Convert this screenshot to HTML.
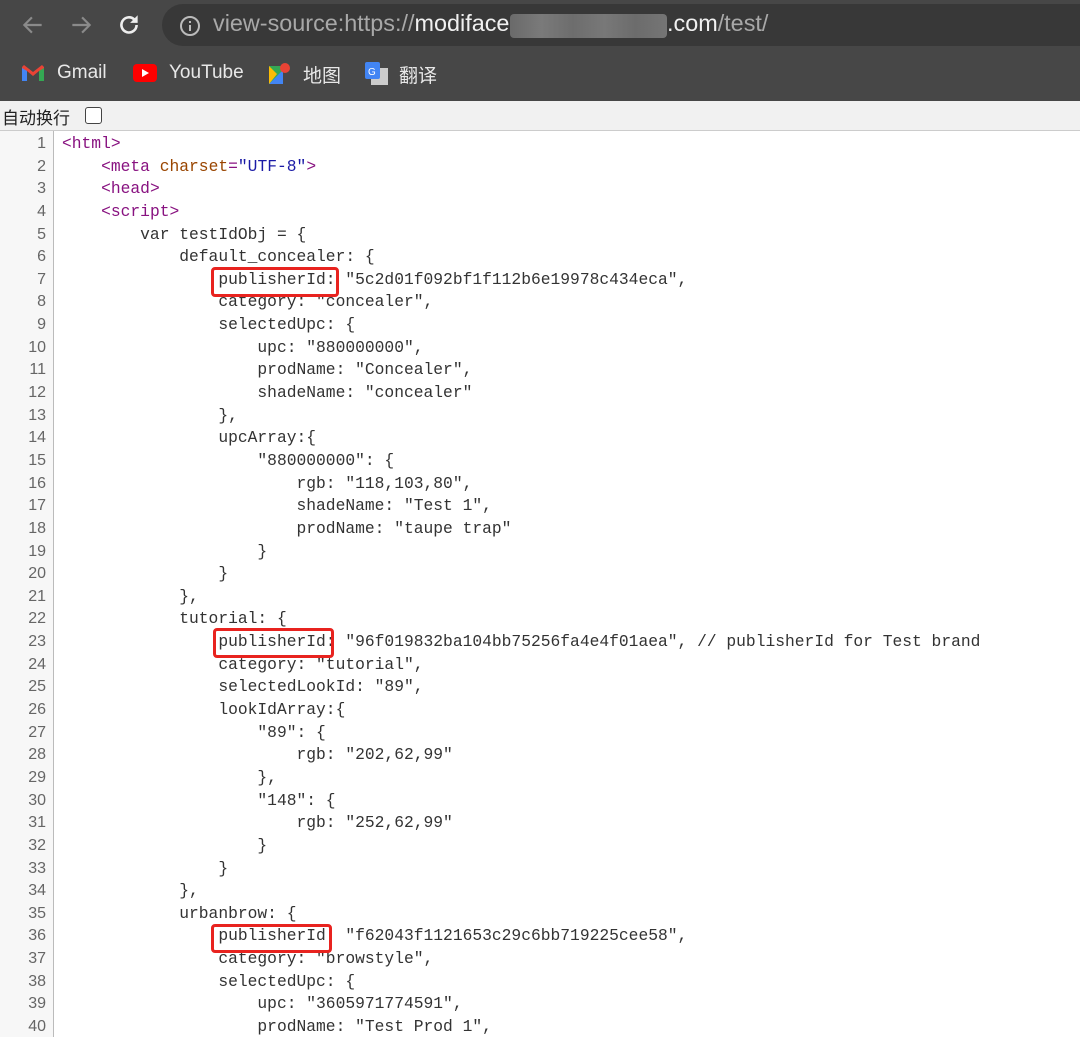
<!DOCTYPE html>
<html><head><meta charset="utf-8"><style>
body{margin:0;width:1080px;height:1037px;overflow:hidden;background:#fff;position:relative;font-family:"Liberation Sans","Noto Sans CJK SC",sans-serif}
#top{position:absolute;left:0;top:0;width:1080px;height:101px;background:#474747}
#pill{position:absolute;left:162px;top:4px;width:940px;height:42px;border-radius:21px;background:#383838}
.url{position:absolute;top:10px;font-size:23.4px;color:#a8a8a8;white-space:nowrap}
.url b{font-weight:normal;color:#f0f0f0}
.blur{position:absolute;left:510px;top:14px;width:157px;height:24px;background:linear-gradient(90deg,#6a6a6a,#7a7a7a 20%,#6d6d6d 40%,#787878 60%,#6c6c6c 80%,#757575);border-radius:4px}
.bm{position:absolute;top:62px;font-size:19px;color:#e8e8e8;white-space:nowrap}
#bar{position:absolute;left:0;top:101px;width:1080px;height:29px;background:#f1f1f1;border-bottom:1px solid #ccc;font-size:17px;color:#222}
#gut{position:absolute;left:0;top:131px;width:53px;height:906px;background:#f7f7f7;border-right:1px solid #bbb}
.code{position:absolute;left:0;top:133px;font-family:"Liberation Mono",monospace;font-size:16.3px;line-height:22.64px;white-space:pre;color:#333}
.ln{display:inline-block;width:46px;text-align:right;color:#666;margin-right:16px;font-family:"Liberation Sans",sans-serif;font-size:16px}
.t{color:#881280}.a{color:#994500}.v{color:#1a1aa6}
.box{position:absolute;border:3px solid #e8231f;border-radius:4px}
</style></head><body>
<div id="top">
<svg style="position:absolute;left:20px;top:12px" width="26" height="26" viewBox="0 0 24 24"><path d="M20 12H5M11 5l-7 7 7 7" stroke="#8a8a8a" stroke-width="2" fill="none"/></svg>
<svg style="position:absolute;left:68px;top:12px" width="26" height="26" viewBox="0 0 24 24"><path d="M4 12h15M13 5l7 7-7 7" stroke="#8a8a8a" stroke-width="2" fill="none"/></svg>
<svg style="position:absolute;left:116px;top:12px" width="26" height="26" viewBox="0 0 24 24"><path d="M19 12a7 7 0 1 1-2-5" stroke="#eee" stroke-width="2.4" fill="none"/><path d="M20 3v7h-7z" fill="#eee"/></svg>
<div id="pill"></div>
<svg style="position:absolute;left:178px;top:14px" width="24" height="24" viewBox="0 0 24 24"><circle cx="12" cy="12" r="9" stroke="#bbb" stroke-width="2" fill="none"/><path d="M12 11v6M12 7v2" stroke="#bbb" stroke-width="2"/></svg>
<div class="url" style="left:213px">view-source:https://<b>modiface</b></div>
<div class="url" style="left:667px"><b>.com</b>/test/</div>
<div class="blur"></div>
<svg style="position:absolute;left:22px;top:65px" width="22" height="16" viewBox="0 0 22 16"><path d="M0 2v14h5V6l6 5 6-5v10h5V2l-2-2-9 7-9-7z" fill="#ea4335"/><path d="M0 3v13h5V6z" fill="#4285f4"/><path d="M17 6v10h5V3z" fill="#34a853"/></svg>
<div class="bm" style="left:57px">Gmail</div>
<svg style="position:absolute;left:133px;top:64px" width="24" height="18"><rect width="24" height="18" rx="4" fill="#f00"/><path d="M9 5l7 4-7 4z" fill="#fff"/></svg>
<div class="bm" style="left:169px">YouTube</div>
<svg style="position:absolute;left:269px;top:62px" width="22" height="22"><path d="M0 4h14v18H0z" fill="#34a853"/><path d="M0 22L14 8v14z" fill="#4285f4"/><path d="M0 4l8 8-8 10z" fill="#fbbc04"/><circle cx="16" cy="6" r="5" fill="#ea4335"/></svg>
<div class="bm" style="left:303px;top:61px">地图</div>
<svg style="position:absolute;left:365px;top:62px" width="24" height="24"><rect x="6" y="6" width="17" height="17" fill="#ccc"/><rect x="0" y="0" width="15" height="17" rx="2" fill="#4285f4"/><text x="3" y="13" font-size="10" fill="#fff" font-family="Liberation Sans">G</text></svg>
<div class="bm" style="left:399px;top:61px">翻译</div>
</div>
<div id="bar"><span style="position:absolute;left:2px;top:3px">自动换行</span><span style="position:absolute;left:85px;top:6px;width:15px;height:15px;border:1.5px solid #444;border-radius:3px;background:#fff"></span></div>
<div id="gut"></div>
<div class="code"><span class="ln">1</span><span class="t">&lt;html&gt;</span>
<span class="ln">2</span>    <span class="t">&lt;meta </span><span class="a">charset</span><span class="t">=</span><span class="v">"UTF-8"</span><span class="t">&gt;</span>
<span class="ln">3</span>    <span class="t">&lt;head&gt;</span>
<span class="ln">4</span>    <span class="t">&lt;script&gt;</span>
<span class="ln">5</span>        var testIdObj = {
<span class="ln">6</span>            default_concealer: {
<span class="ln">7</span>                publisherId: "5c2d01f092bf1f112b6e19978c434eca",
<span class="ln">8</span>                category: "concealer",
<span class="ln">9</span>                selectedUpc: {
<span class="ln">10</span>                    upc: "880000000",
<span class="ln">11</span>                    prodName: "Concealer",
<span class="ln">12</span>                    shadeName: "concealer"
<span class="ln">13</span>                },
<span class="ln">14</span>                upcArray:{
<span class="ln">15</span>                    "880000000": {
<span class="ln">16</span>                        rgb: "118,103,80",
<span class="ln">17</span>                        shadeName: "Test 1",
<span class="ln">18</span>                        prodName: "taupe trap"
<span class="ln">19</span>                    }
<span class="ln">20</span>                }
<span class="ln">21</span>            },
<span class="ln">22</span>            tutorial: {
<span class="ln">23</span>                publisherId: "96f019832ba104bb75256fa4e4f01aea", // publisherId for Test brand
<span class="ln">24</span>                category: "tutorial",
<span class="ln">25</span>                selectedLookId: "89",
<span class="ln">26</span>                lookIdArray:{
<span class="ln">27</span>                    "89": {
<span class="ln">28</span>                        rgb: "202,62,99"
<span class="ln">29</span>                    },
<span class="ln">30</span>                    "148": {
<span class="ln">31</span>                        rgb: "252,62,99"
<span class="ln">32</span>                    }
<span class="ln">33</span>                }
<span class="ln">34</span>            },
<span class="ln">35</span>            urbanbrow: {
<span class="ln">36</span>                publisherId: "f62043f1121653c29c6bb719225cee58",
<span class="ln">37</span>                category: "browstyle",
<span class="ln">38</span>                selectedUpc: {
<span class="ln">39</span>                    upc: "3605971774591",
<span class="ln">40</span>                    prodName: "Test Prod 1",</div>
<div class="box" style="left:211px;top:267px;width:122px;height:24px"></div>
<div class="box" style="left:213px;top:628px;width:115px;height:24px"></div>
<div class="box" style="left:211px;top:924px;width:115px;height:23px"></div>
</body></html>
